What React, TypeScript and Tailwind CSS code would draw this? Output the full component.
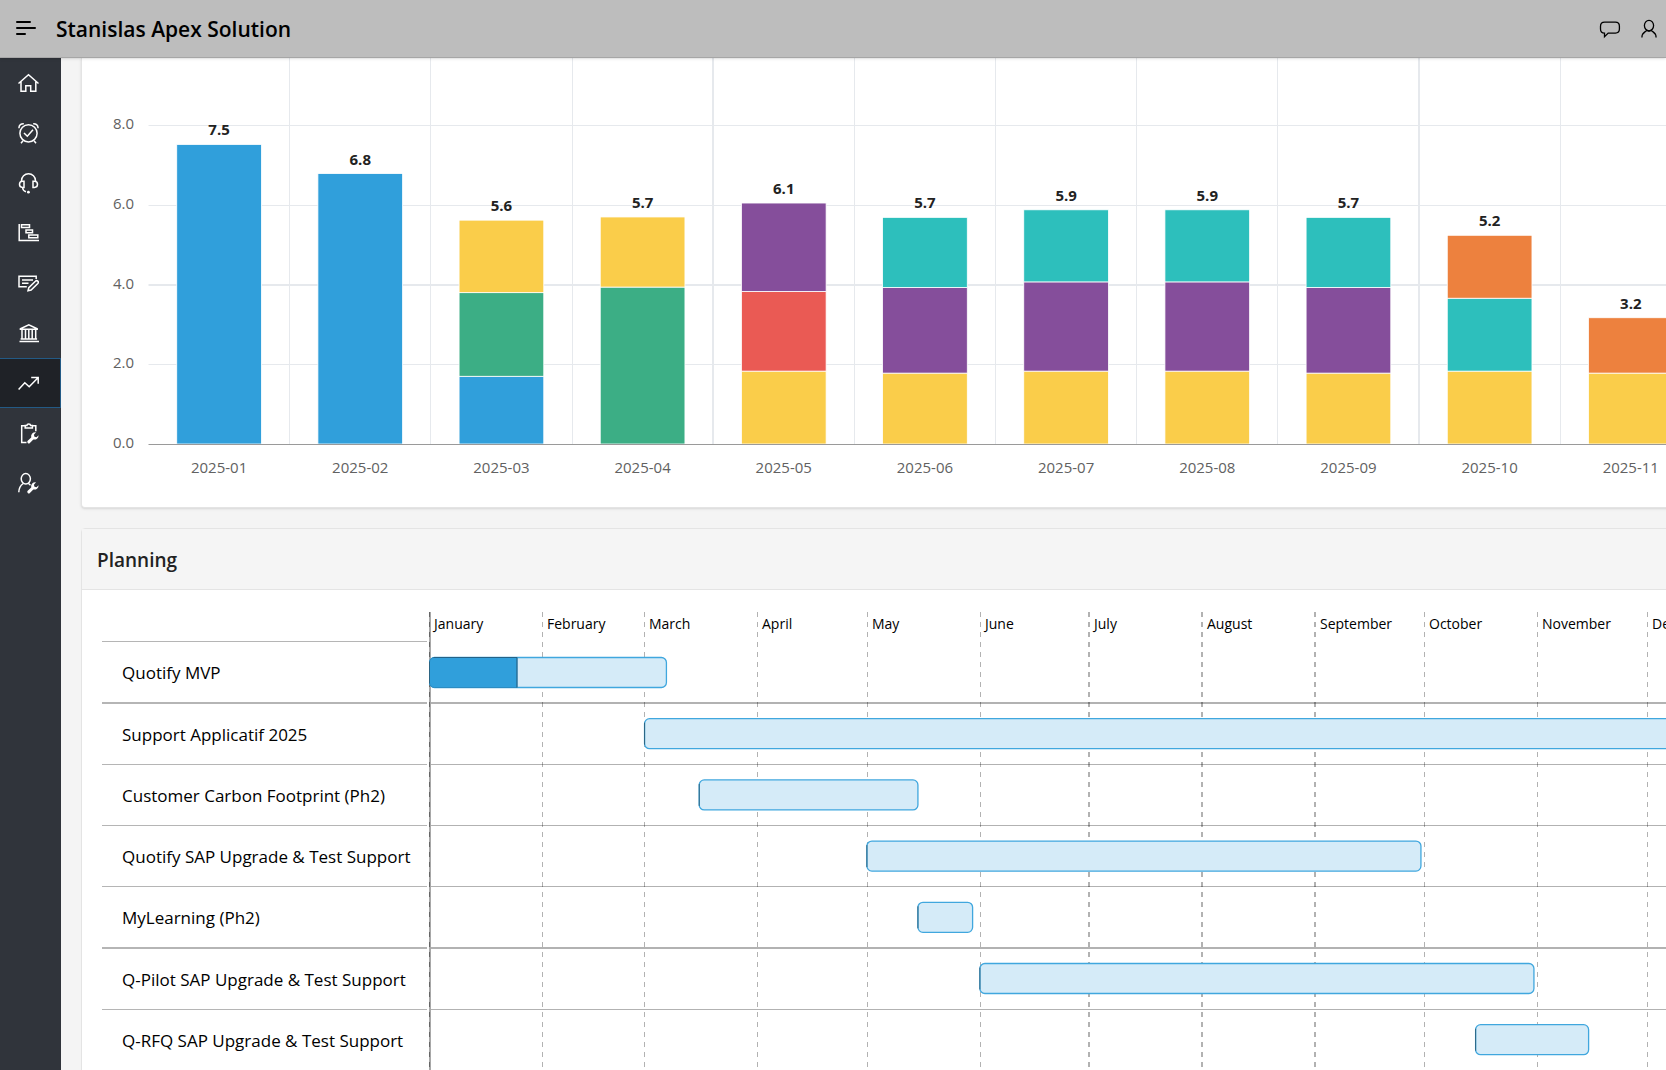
import type { ReactNode } from "react";

const BLUE = "#309fdb";
const YELLOW = "#facd4a";
const GREEN = "#3cae85";
const PURPLE = "#854e9b";
const RED = "#ea5a54";
const TEAL = "#2dbfbc";
const ORANGE = "#ed813e";

// each part is [top value of the segment, colour], from the bottom up
const loads: { month: string; total: string; parts: [number, string][] }[] = [
  { month: "2025-01", total: "7.5", parts: [[7.52, BLUE]] },
  { month: "2025-02", total: "6.8", parts: [[6.79, BLUE]] },
  {
    month: "2025-03",
    total: "5.6",
    parts: [
      [1.7, BLUE],
      [3.8, GREEN],
      [5.62, YELLOW],
    ],
  },
  {
    month: "2025-04",
    total: "5.7",
    parts: [
      [3.94, GREEN],
      [5.7, YELLOW],
    ],
  },
  {
    month: "2025-05",
    total: "6.1",
    parts: [
      [1.83, YELLOW],
      [3.83, RED],
      [6.05, PURPLE],
    ],
  },
  {
    month: "2025-06",
    total: "5.7",
    parts: [
      [1.78, YELLOW],
      [3.93, PURPLE],
      [5.69, TEAL],
    ],
  },
  {
    month: "2025-07",
    total: "5.9",
    parts: [
      [1.83, YELLOW],
      [4.07, PURPLE],
      [5.88, TEAL],
    ],
  },
  {
    month: "2025-08",
    total: "5.9",
    parts: [
      [1.83, YELLOW],
      [4.07, PURPLE],
      [5.88, TEAL],
    ],
  },
  {
    month: "2025-09",
    total: "5.7",
    parts: [
      [1.78, YELLOW],
      [3.93, PURPLE],
      [5.69, TEAL],
    ],
  },
  {
    month: "2025-10",
    total: "5.2",
    parts: [
      [1.83, YELLOW],
      [3.66, TEAL],
      [5.24, ORANGE],
    ],
  },
  {
    month: "2025-11",
    total: "3.2",
    parts: [
      [1.78, YELLOW],
      [3.17, ORANGE],
    ],
  },
];

const COL = 141.17;
const UNIT = 39.83;
const LEFT = 66.5;
const BASE = 386;

function LoadChart() {
  return (
    <svg width="1760" height="449" className="block max-w-none">
      {[2, 4, 6, 8].map((v) => (
        <line
          key={v}
          x1={LEFT}
          x2="1760"
          y1={Math.round(BASE - v * UNIT) + (v === 4 ? 0 : 0.5)}
          y2={Math.round(BASE - v * UNIT) + (v === 4 ? 0 : 0.5)}
          stroke="#e6e9ed"
          strokeWidth={v === 4 ? 2 : 1}
        />
      ))}
      {loads.map((m, i) => {
        const thick = i === 3 || i === 8;
        const x = Math.floor(LEFT + (i + 1) * COL) + (thick ? 0 : 0.5);
        return (
          <line
            key={m.month}
            x1={x}
            x2={x}
            y1="0"
            y2={BASE}
            stroke="#e6e9ed"
            strokeWidth={thick ? 2 : 1}
          />
        );
      })}
      {[0, 2, 4, 6, 8].map((v) => (
        <text
          key={v}
          x="52"
          y={BASE - v * UNIT + 4}
          textAnchor="end"
          className="fill-[#616161] text-[15px]"
        >
          {v.toFixed(1)}
        </text>
      ))}
      {loads.map((m, i) => {
        const x = LEFT + i * COL + COL * 0.2;
        const mid = LEFT + (i + 0.5) * COL;
        const top = m.parts[m.parts.length - 1][0];
        return (
          <g key={m.month}>
            {m.parts.map(([value, color], j) => {
              const from = j === 0 ? 0 : m.parts[j - 1][0];
              return (
                <rect
                  key={j}
                  x={x}
                  y={BASE - value * UNIT}
                  width={COL * 0.6}
                  height={(value - from) * UNIT}
                  fill={color}
                  stroke="#ffffff"
                  strokeWidth="0.8"
                />
              );
            })}
            <text
              x={mid}
              y={BASE - top * UNIT - 9}
              textAnchor="middle"
              className="fill-[#222222] text-[15px] font-bold"
            >
              {m.total}
            </text>
            <text
              x={mid}
              y="415"
              textAnchor="middle"
              className="fill-[#616161] text-[15px]"
            >
              {m.month}
            </text>
          </g>
        );
      })}
      <line x1={LEFT} x2="1760" y1="386.5" y2="386.5" stroke="#9a9a9a" />
    </svg>
  );
}

const DAY = 3.645;
const months = [
  { name: "January", day: 0 },
  { name: "February", day: 31 },
  { name: "March", day: 59 },
  { name: "April", day: 90 },
  { name: "May", day: 120 },
  { name: "June", day: 151 },
  { name: "July", day: 181, thick: true },
  { name: "August", day: 212, thick: true },
  { name: "September", day: 243, thick: true },
  { name: "October", day: 273 },
  { name: "November", day: 304 },
  { name: "December", day: 334 },
];

const tasks = [
  { name: "Quotify MVP", start: 0, end: 65, done: 24 },
  { name: "Support Applicatif 2025", start: 59, end: 364 },
  { name: "Customer Carbon Footprint (Ph2)", start: 74, end: 134 },
  { name: "Quotify SAP Upgrade & Test Support", start: 120, end: 272 },
  { name: "MyLearning (Ph2)", start: 134, end: 149 },
  { name: "Q-Pilot SAP Upgrade & Test Support", start: 151, end: 303 },
  { name: "Q-RFQ SAP Upgrade & Test Support", start: 287, end: 318 },
];

function Timeline() {
  return (
    <svg width="1340" height="520" className="block max-w-none shrink-0">
      {tasks.map((t, i) => {
        const thick = i % 4 === 0;
        const y = Math.floor(30 + (i + 1) * 61.2) + (thick ? 0 : 0.5);
        return (
          <line
            key={t.name}
            x1="1"
            x2="1340"
            y1={y}
            y2={y}
            stroke="#000000"
            strokeOpacity="0.3"
            strokeWidth={thick ? 2 : 1}
          />
        );
      })}
      <line x1="1" x2="1" y1="0" y2="520" stroke="#a8a8a8" strokeWidth="2" />
      {months.map((m) => {
        const x = Math.floor(0.7 + m.day * DAY);
        return (
          <g key={m.name}>
            <line
              x1={m.thick ? x : x + 0.5}
              x2={m.thick ? x : x + 0.5}
              y1="0"
              y2="520"
              stroke="#000000"
              strokeOpacity={m.day === 0 ? 0.4 : 0.3}
              strokeWidth={m.thick ? 2 : 1}
              strokeDasharray="5 5"
            />
            <text x={x + 5} y="17" className="fill-black text-sm">
              {m.name}
            </text>
          </g>
        );
      })}
      {tasks.map((t, i) => {
        const x = 0.5 + t.start * DAY;
        const y = 45.5 + i * 61.2;
        const w = (t.end - t.start) * DAY;
        return (
          <g key={t.name}>
            <rect
              x={x}
              y={y}
              width={w}
              height="30"
              rx="5"
              fill="#d5ebf8"
              stroke="#40a7de"
              strokeWidth="1.3"
            />
            {t.done && (
              <>
                <path
                  d={`M${x + 5} ${y}H${x + t.done * DAY}v30H${x + 5}a5 5 0 0 1-5-5v-20a5 5 0 0 1 5-5z`}
                  fill={BLUE}
                  stroke="#2b8cc2"
                />
                <path
                  d={`M${x + 4} ${y}H${x + t.done * DAY}v30`}
                  fill="none"
                  stroke="#256286"
                />
              </>
            )}
            <line x1={x} x2={x} y1={y + 4} y2={y + 26} stroke="#2b6482" />
          </g>
        );
      })}
    </svg>
  );
}

function Icon({ children }: { children: ReactNode }) {
  return (
    <svg
      width="21"
      height="22"
      viewBox="0 0 21 22"
      fill="none"
      stroke="currentColor"
      strokeWidth="1.5"
      aria-hidden="true"
    >
      {children}
    </svg>
  );
}

function Wrench() {
  return (
    <path
      d="M20.6 13.2a4.2 4.2 0 0 1-5.3 4.2l-3.4 3.5a1.5 1.5 0 0 1-2.2-2.1l3.5-3.4a4.2 4.2 0 0 1 4.8-5.1l-2.1 2.5.6 2 2 .5z"
      fill="currentColor"
      stroke="none"
    />
  );
}

const menu: { label: string; icon: ReactNode }[] = [
  {
    label: "Home",
    icon: (
      <path d="M.5 11.5l10-8.8 10 8.8M3 9.8v9.5h4.8v-5.5h4.9v5.5h5.1V9.8" />
    ),
  },
  {
    label: "Time",
    icon: (
      <>
        <circle cx="10.5" cy="11.3" r="8.6" />
        <path d="M6 11l3.3 3.2L15 7.8M.9 6.2C.9 3 3.2 1.5 5.8 1.7M20.1 6.2c0-3.2-2.3-4.7-4.9-4.5M5 18.8l-2 2.5M16 18.8l2 2.5" />
      </>
    ),
  },
  {
    label: "Support",
    icon: (
      <>
        <path d="M3.5 9.5V8.7a7 7 0 0 1 14 0v.8M4.6 15.8c.2 2 1.5 3.6 3.4 4" />
        <path d="M6 9.2H4.6a3.1 3.1 0 0 0 0 6.2H6zM15 9.2h1.4a3.1 3.1 0 0 1 0 6.2H15z" />
        <circle cx="10.4" cy="20.2" r="1.4" fill="currentColor" stroke="none" />
      </>
    ),
  },
  {
    label: "Planning",
    icon: (
      <>
        <path d="M1.2 2v16.4H21" />
        <path d="M3.5 2.8h8v2.7h-8zM8 7.9h6.5v2.8H8zM10.8 13h9v2.8h-9z" />
      </>
    ),
  },
  {
    label: "Quotes",
    icon: (
      <>
        <path d="M18.2 7V4.2H1v10.6h7.8M4 8.1h11M4 11.3h6.5" />
        <path d="M10 18.8l.8-3.2 6.6-6.4a1.6 1.6 0 0 1 2.4 2.3L13.1 18z" />
      </>
    ),
  },
  {
    label: "Accounts",
    icon: (
      <path d="M2.4 7.3v-.5l8.4-4 8.4 4v.5zM4 8v9M7.5 8v9M10.8 8v9M14.2 8v9M17.7 8v9M2.6 17h16.5M1.5 19.4H21" />
    ),
  },
  {
    label: "Trends",
    icon: <path d="M.6 17.4l6.2-6.7 4.4 4L20 5.8M13.2 5.4h7v6.4" />,
  },
  {
    label: "Checks",
    icon: (
      <>
        <path d="M7 3.7H3.7v16.8h4.8M14.6 3.7h3.2v5.6M7.2 6V3.4h1.7c.2-2 3.5-2 3.7 0h1.8V6z" />
        <Wrench />
      </>
    ),
  },
  {
    label: "Resources",
    icon: (
      <>
        <ellipse cx="7.8" cy="6.8" rx="4.6" ry="5.2" />
        <path d="M.8 20.3c.1-5.2 1.8-7 4.4-8.8M10.3 11.2l2.2 2" />
        <Wrench />
      </>
    ),
  },
];

export default function App() {
  return (
    <div className="flex h-screen flex-col overflow-hidden bg-[#f4f4f4] font-['Open_Sans','Noto_Sans',sans-serif] text-black">
      <header className="z-10 flex h-[58px] shrink-0 items-center justify-between border-b border-[#a6a6a6] bg-[#bdbdbd] pl-4 shadow-sm">
        <div className="flex items-center gap-5">
          <button type="button" aria-label="Menu">
            <svg
              width="20"
              height="17"
              stroke="currentColor"
              strokeWidth="2"
              strokeLinecap="round"
              className="block"
            >
              <path d="M1 2h13M1 8h18M1 14h8" />
            </svg>
          </button>
          <h1 className="text-[21px] leading-7 font-semibold">
            Stanislas Apex Solution
          </h1>
        </div>
        <div className="flex items-center">
          <button type="button" aria-label="Messages" className="mr-5">
            <svg
              width="22"
              height="20"
              fill="none"
              stroke="currentColor"
              strokeWidth="1.3"
              className="block"
            >
              <path d="M5.6 3.2h10.8c2.9 0 4 1.6 4 4v2.9c0 2.4-1.1 4-4 4H9.2l-3.7 3.6v-3.6c-2.8 0-4-1.6-4-4V7.2c0-2.4 1.2-4 4.1-4z" />
            </svg>
          </button>
          <button type="button" aria-label="Account" className="mr-[9px]">
            <svg
              width="16"
              height="20"
              fill="none"
              stroke="currentColor"
              strokeWidth="1.3"
              className="block"
            >
              <ellipse cx="8" cy="6.6" rx="4.6" ry="5.2" />
              <path d="M.9 18.5c0-5.2 2.6-4.8 5.1-7.2M15.1 18.5c0-5.2-2.6-4.8-5.1-7.2M6 11.3c1.2 1 2.8 1 4 0" />
            </svg>
          </button>
        </div>
      </header>

      <div className="flex min-h-0 flex-1">
        <nav className="w-[61px] shrink-0 bg-[#30343b] text-white">
          {menu.map((item) => (
            <a
              key={item.label}
              href="#"
              aria-label={item.label}
              className={
                item.label === "Trends"
                  ? "flex h-[50px] items-center border border-l-0 border-[#235a85] bg-[#1f2227] pl-[18px]"
                  : "flex h-[50px] items-center pl-[18px]"
              }
            >
              <Icon>{item.icon}</Icon>
            </a>
          ))}
        </nav>

        <main className="min-w-0 flex-1 overflow-hidden pl-5">
          <section className="min-w-max rounded-b-sm border border-t-0 border-[#e4e4e4] bg-white shadow-sm">
            <LoadChart />
          </section>

          <section className="mt-5 min-w-max rounded-t-sm border border-[#e4e4e4] bg-white">
            <h2 className="border-b border-[#e4e4e4] bg-[#f5f5f5] px-[15px] pt-[17px] pb-[15px] text-[19px] leading-7 font-semibold text-[#222222]">
              Planning
            </h2>
            <div className="flex gap-[2px] pt-[22px] pl-5">
              <ul className="mt-[29px] w-[325px] shrink-0 border-t border-[#b5b5b5]">
                {tasks.map((t, i) => (
                  <li
                    key={t.name}
                    className={
                      i % 4 === 0
                        ? "box-content flex h-[58px] items-center border-b-2 border-[#b5b5b5] pt-[2px] pl-5 text-[17px]"
                        : "box-content flex h-[58px] items-center border-b border-[#b5b5b5] pt-[2px] pl-5 text-[17px]"
                    }
                  >
                    {t.name}
                  </li>
                ))}
              </ul>
              <Timeline />
            </div>
          </section>
        </main>
      </div>
    </div>
  );
}
